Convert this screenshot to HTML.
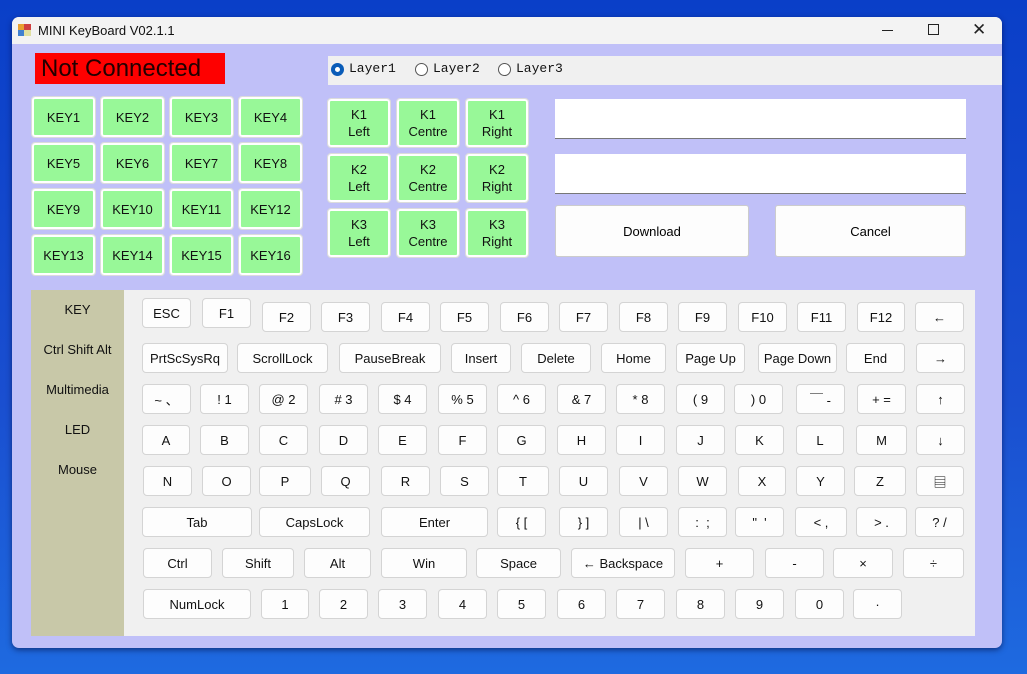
<!DOCTYPE html>
<html><head><meta charset="utf-8"><style>
*{box-sizing:border-box;margin:0;padding:0}
body{width:1027px;height:674px;overflow:hidden;position:relative;font-family:"Liberation Sans","Noto Sans CJK SC",sans-serif;background:linear-gradient(180deg,#0a3fc8 0%,#1a4fd0 60%,#1e6ae0 100%)}
.a{position:absolute}
.win{left:12px;top:17px;width:990px;height:631px;background:#c0c0f8;border-radius:7px;overflow:hidden;box-shadow:0 2px 6px rgba(0,0,40,.5)}
.tb{left:0;top:0;width:990px;height:27px;background:#f3f3f3}
.k{position:absolute;height:30px;background:#fdfdfd;border:1px solid #d4d4d4;border-radius:4px;font-size:13px;color:#111;display:flex;align-items:center;justify-content:center;white-space:nowrap}
.g{position:absolute;width:63px;height:40px;background:#98f898;border:2px solid #fff;outline:1px solid #dcdcdc;border-radius:3px;font-size:13px;display:flex;align-items:center;justify-content:center;text-align:center;line-height:17px;color:#111}
.kb{height:48px}
.side{position:absolute;left:0;width:93px;text-align:center;font-size:13px;color:#111}
.rd{position:absolute;top:63px;width:13px;height:13px;border-radius:50%;border:1px solid #555;background:#fff}
.lt{position:absolute;top:61px;font-family:"Liberation Mono","Noto Serif CJK SC",monospace;font-size:13px;color:#111}
.bt{position:absolute;background:#fdfdfd;border:1px solid #ccc;border-radius:3px;font-size:13px;display:flex;align-items:center;justify-content:center}
</style></head><body>
<div class="a win">
 <div class="a tb"></div>
</div>
<!-- title -->
<div class="a" style="left:18px;top:24px;width:13px;height:12px">
 <div class="a" style="left:0;top:0;width:6px;height:6px;background:#e8a030"></div>
 <div class="a" style="left:6px;top:0;width:7px;height:6px;background:#d04040"></div>
 <div class="a" style="left:0;top:6px;width:6px;height:6px;background:#4080d0"></div>
 <div class="a" style="left:6px;top:6px;width:7px;height:6px;background:#e0e0a0"></div>
</div>
<div class="a" style="left:38px;top:23px;font-size:13px;color:#111">MINI KeyBoard V02.1.1</div>
<div class="a" style="left:882px;top:30px;width:11px;height:1px;background:#222"></div>
<div class="a" style="left:928px;top:24px;width:11px;height:11px;border:1px solid #222"></div>
<div class="a" style="left:972px;top:20px;font-size:17px;color:#222">✕</div>

<div class="a" style="left:35px;top:53px;width:190px;height:31px;background:#fe0000;color:#200;font-size:24px;line-height:31px;padding-left:6px">Not Connected</div>

<div class="a" style="left:328px;top:56px;width:674px;height:29px;background:#f0f0f0"></div>
<div class="rd" style="left:331px;border:4px solid #0a5cb8;background:#fff"></div>
<div class="lt" style="left:349px">Layer1</div>
<div class="rd" style="left:415px"></div>
<div class="lt" style="left:433px">Layer2</div>
<div class="rd" style="left:498px"></div>
<div class="lt" style="left:516px">Layer3</div>

<div class="g" style="left:32px;top:97px">KEY1</div><div class="g" style="left:101px;top:97px">KEY2</div><div class="g" style="left:170px;top:97px">KEY3</div><div class="g" style="left:239px;top:97px">KEY4</div>
<div class="g" style="left:32px;top:143px">KEY5</div><div class="g" style="left:101px;top:143px">KEY6</div><div class="g" style="left:170px;top:143px">KEY7</div><div class="g" style="left:239px;top:143px">KEY8</div>
<div class="g" style="left:32px;top:189px">KEY9</div><div class="g" style="left:101px;top:189px">KEY10</div><div class="g" style="left:170px;top:189px">KEY11</div><div class="g" style="left:239px;top:189px">KEY12</div>
<div class="g" style="left:32px;top:235px">KEY13</div><div class="g" style="left:101px;top:235px">KEY14</div><div class="g" style="left:170px;top:235px">KEY15</div><div class="g" style="left:239px;top:235px">KEY16</div>

<div class="g kb" style="left:328px;top:99px;width:62px">K1<br>Left</div><div class="g kb" style="left:397px;top:99px;width:62px">K1<br>Centre</div><div class="g kb" style="left:466px;top:99px;width:62px">K1<br>Right</div>
<div class="g kb" style="left:328px;top:154px;width:62px">K2<br>Left</div><div class="g kb" style="left:397px;top:154px;width:62px">K2<br>Centre</div><div class="g kb" style="left:466px;top:154px;width:62px">K2<br>Right</div>
<div class="g kb" style="left:328px;top:209px;width:62px">K3<br>Left</div><div class="g kb" style="left:397px;top:209px;width:62px">K3<br>Centre</div><div class="g kb" style="left:466px;top:209px;width:62px">K3<br>Right</div>

<div class="a" style="left:555px;top:99px;width:411px;height:40px;background:#fff;border-bottom:1px solid #777"></div>
<div class="a" style="left:555px;top:154px;width:411px;height:40px;background:#fff;border-bottom:1px solid #777"></div>
<div class="bt" style="left:555px;top:205px;width:194px;height:52px">Download</div>
<div class="bt" style="left:775px;top:205px;width:191px;height:52px">Cancel</div>

<div class="a" style="left:31px;top:290px;width:93px;height:346px;background:#c8c8a8"></div>
<div class="a" style="left:124px;top:290px;width:851px;height:346px;background:#f0f0f0"></div>
<div class="side" style="left:31px;top:302px">KEY</div>
<div class="side" style="left:31px;top:342px">Ctrl Shift Alt</div>
<div class="side" style="left:31px;top:382px">Multimedia</div>
<div class="side" style="left:31px;top:422px">LED</div>
<div class="side" style="left:31px;top:462px">Mouse</div>

<!-- row1 -->
<div class="k" style="left:142px;top:298px;width:49px">ESC</div>
<div class="k" style="left:202px;top:298px;width:49px">F1</div>
<div class="k" style="left:262px;top:302px;width:49px">F2</div>
<div class="k" style="left:321px;top:302px;width:49px">F3</div>
<div class="k" style="left:381px;top:302px;width:49px">F4</div>
<div class="k" style="left:440px;top:302px;width:49px">F5</div>
<div class="k" style="left:500px;top:302px;width:49px">F6</div>
<div class="k" style="left:559px;top:302px;width:49px">F7</div>
<div class="k" style="left:619px;top:302px;width:49px">F8</div>
<div class="k" style="left:678px;top:302px;width:49px">F9</div>
<div class="k" style="left:738px;top:302px;width:49px">F10</div>
<div class="k" style="left:797px;top:302px;width:49px">F11</div>
<div class="k" style="left:857px;top:302px;width:48px">F12</div>
<div class="k" style="left:915px;top:302px;width:49px">←</div>
<!-- row2 -->
<div class="k" style="left:142px;top:343px;width:86px">PrtScSysRq</div>
<div class="k" style="left:237px;top:343px;width:91px">ScrollLock</div>
<div class="k" style="left:339px;top:343px;width:102px">PauseBreak</div>
<div class="k" style="left:451px;top:343px;width:60px">Insert</div>
<div class="k" style="left:521px;top:343px;width:70px">Delete</div>
<div class="k" style="left:601px;top:343px;width:65px">Home</div>
<div class="k" style="left:676px;top:343px;width:69px">Page Up</div>
<div class="k" style="left:758px;top:343px;width:79px">Page Down</div>
<div class="k" style="left:846px;top:343px;width:59px">End</div>
<div class="k" style="left:916px;top:343px;width:49px">→</div>
<!-- row3 -->
<div class="k" style="left:142px;top:384px;width:49px">~ 、</div>
<div class="k" style="left:200px;top:384px;width:49px">! 1</div>
<div class="k" style="left:259px;top:384px;width:49px">@ 2</div>
<div class="k" style="left:319px;top:384px;width:49px"># 3</div>
<div class="k" style="left:378px;top:384px;width:49px">$ 4</div>
<div class="k" style="left:438px;top:384px;width:49px">% 5</div>
<div class="k" style="left:497px;top:384px;width:49px">^ 6</div>
<div class="k" style="left:557px;top:384px;width:49px">&amp; 7</div>
<div class="k" style="left:616px;top:384px;width:49px">* 8</div>
<div class="k" style="left:676px;top:384px;width:49px">( 9</div>
<div class="k" style="left:734px;top:384px;width:49px">) 0</div>
<div class="k" style="left:796px;top:384px;width:49px">￣ -</div>
<div class="k" style="left:857px;top:384px;width:49px">+ =</div>
<div class="k" style="left:916px;top:384px;width:49px">↑</div>
<!-- row4 -->
<div class="k" style="left:142px;top:425px;width:48px">A</div>
<div class="k" style="left:200px;top:425px;width:49px">B</div>
<div class="k" style="left:259px;top:425px;width:49px">C</div>
<div class="k" style="left:319px;top:425px;width:49px">D</div>
<div class="k" style="left:378px;top:425px;width:49px">E</div>
<div class="k" style="left:438px;top:425px;width:49px">F</div>
<div class="k" style="left:497px;top:425px;width:49px">G</div>
<div class="k" style="left:557px;top:425px;width:49px">H</div>
<div class="k" style="left:616px;top:425px;width:49px">I</div>
<div class="k" style="left:676px;top:425px;width:49px">J</div>
<div class="k" style="left:735px;top:425px;width:49px">K</div>
<div class="k" style="left:796px;top:425px;width:48px">L</div>
<div class="k" style="left:856px;top:425px;width:51px">M</div>
<div class="k" style="left:916px;top:425px;width:49px">↓</div>
<!-- row5 -->
<div class="k" style="left:143px;top:466px;width:49px">N</div>
<div class="k" style="left:202px;top:466px;width:49px">O</div>
<div class="k" style="left:259px;top:466px;width:52px">P</div>
<div class="k" style="left:321px;top:466px;width:49px">Q</div>
<div class="k" style="left:381px;top:466px;width:49px">R</div>
<div class="k" style="left:440px;top:466px;width:49px">S</div>
<div class="k" style="left:497px;top:466px;width:52px">T</div>
<div class="k" style="left:559px;top:466px;width:49px">U</div>
<div class="k" style="left:619px;top:466px;width:49px">V</div>
<div class="k" style="left:678px;top:466px;width:49px">W</div>
<div class="k" style="left:738px;top:466px;width:48px">X</div>
<div class="k" style="left:796px;top:466px;width:49px">Y</div>
<div class="k" style="left:854px;top:466px;width:52px">Z</div>
<div class="k" style="left:916px;top:466px;width:48px">▤</div>
<!-- row6 -->
<div class="k" style="left:142px;top:507px;width:110px">Tab</div>
<div class="k" style="left:259px;top:507px;width:111px">CapsLock</div>
<div class="k" style="left:381px;top:507px;width:107px">Enter</div>
<div class="k" style="left:497px;top:507px;width:49px">{ [</div>
<div class="k" style="left:559px;top:507px;width:49px">} ]</div>
<div class="k" style="left:619px;top:507px;width:49px">| \</div>
<div class="k" style="left:678px;top:507px;width:49px">:&nbsp; ;</div>
<div class="k" style="left:735px;top:507px;width:49px">"&nbsp; '</div>
<div class="k" style="left:795px;top:507px;width:52px">&lt; ,</div>
<div class="k" style="left:856px;top:507px;width:51px">&gt; .</div>
<div class="k" style="left:915px;top:507px;width:49px">? /</div>
<!-- row7 -->
<div class="k" style="left:143px;top:548px;width:69px">Ctrl</div>
<div class="k" style="left:222px;top:548px;width:72px">Shift</div>
<div class="k" style="left:304px;top:548px;width:67px">Alt</div>
<div class="k" style="left:381px;top:548px;width:86px">Win</div>
<div class="k" style="left:476px;top:548px;width:85px">Space</div>
<div class="k" style="left:571px;top:548px;width:104px">← Backspace</div>
<div class="k" style="left:685px;top:548px;width:69px">+</div>
<div class="k" style="left:765px;top:548px;width:59px">-</div>
<div class="k" style="left:833px;top:548px;width:60px">×</div>
<div class="k" style="left:903px;top:548px;width:61px">÷</div>
<!-- row8 -->
<div class="k" style="left:143px;top:589px;width:108px">NumLock</div>
<div class="k" style="left:261px;top:589px;width:48px">1</div>
<div class="k" style="left:319px;top:589px;width:49px">2</div>
<div class="k" style="left:378px;top:589px;width:49px">3</div>
<div class="k" style="left:438px;top:589px;width:49px">4</div>
<div class="k" style="left:497px;top:589px;width:49px">5</div>
<div class="k" style="left:557px;top:589px;width:49px">6</div>
<div class="k" style="left:616px;top:589px;width:49px">7</div>
<div class="k" style="left:676px;top:589px;width:49px">8</div>
<div class="k" style="left:735px;top:589px;width:49px">9</div>
<div class="k" style="left:795px;top:589px;width:49px">0</div>
<div class="k" style="left:853px;top:589px;width:49px">·</div>
</body></html>
